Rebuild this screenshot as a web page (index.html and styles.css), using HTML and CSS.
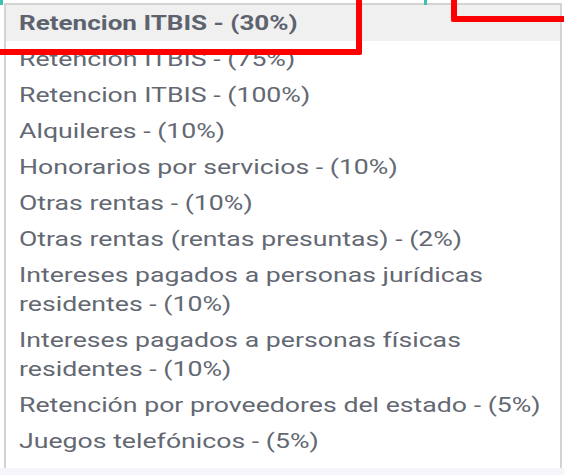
FILE: index.html
```html
<!DOCTYPE html>
<html lang="es">
<head>
<meta charset="utf-8">
<title>Retenciones</title>
<link rel="stylesheet" href="styles.css">
</head>
<body>
<div class="page">
  <div class="field-edge">
    <span class="tick tick-left"></span>
    <span class="tick tick-right"></span>
  </div>
  <ul class="dropdown">
    <li class="option active"><span class="label">Retencion ITBIS - (30%)</span></li>
    <li class="option"><span class="label">Retencion ITBIS - (75%)</span></li>
    <li class="option"><span class="label">Retencion ITBIS - (100%)</span></li>
    <li class="option"><span class="label">Alquileres - (10%)</span></li>
    <li class="option"><span class="label">Honorarios por servicios - (10%)</span></li>
    <li class="option"><span class="label">Otras rentas - (10%)</span></li>
    <li class="option"><span class="label">Otras rentas (rentas presuntas) - (2%)</span></li>
    <li class="option"><span class="label">Intereses pagados a personas jurídicas residentes - (10%)</span></li>
    <li class="option"><span class="label">Intereses pagados a personas físicas residentes - (10%)</span></li>
    <li class="option"><span class="label">Retención por proveedores del estado - (5%)</span></li>
    <li class="option"><span class="label">Juegos telefónicos - (5%)</span></li>
  </ul>
  <div class="footer-strip"></div>
  <div class="mark mark-one"></div>
  <div class="mark mark-two"></div>
</div>
</body>
</html>
```

FILE: styles.css
```css
html, body {
  margin: 0;
  padding: 0;
  background: #ffffff;
}

.page {
  position: relative;
  width: 564px;
  height: 475px;
  overflow: hidden;
  font-family: Roboto, "Liberation Sans", sans-serif;
}

.field-edge {
  position: relative;
  height: 3px;
}

.tick {
  position: absolute;
  top: 0;
  width: 3px;
  height: 5px;
  background: #3cc2b0;
  z-index: 2;
}

.tick-left { left: 0; }
.tick-right { left: 424px; }

.dropdown {
  list-style: none;
  margin: 0 0 0 4px;
  padding: 0 0 9px 0;
  width: 554px;
  border: 2px solid #d3d3d3;
  border-bottom: none;
  background: #ffffff;
}

.option {
  font-size: 21px;
  line-height: 29px;
  padding: 3.5px 0 3.5px 13px;
  color: #636872;
}

.label {
  display: block;
  width: 418px;
  transform: scaleX(1.27);
  transform-origin: left center;
}

.option.active {
  background: #f0f0f0;
  font-weight: bold;
  color: #5d636e;
}

.option.active .label {
  transform: scaleX(1.24);
}

.footer-strip {
  height: 20px;
  background: #f4f6f9;
}

.mark {
  position: absolute;
  border: 0 solid #ff0000;
  border-radius: 2px;
  z-index: 3;
}

.mark-one {
  left: -20px;
  top: -20px;
  width: 376px;
  height: 69px;
  border-right-width: 6px;
  border-bottom-width: 6px;
}

.mark-two {
  left: 451px;
  top: -20px;
  width: 140px;
  height: 36px;
  border-left-width: 6px;
  border-bottom-width: 6px;
}
```
